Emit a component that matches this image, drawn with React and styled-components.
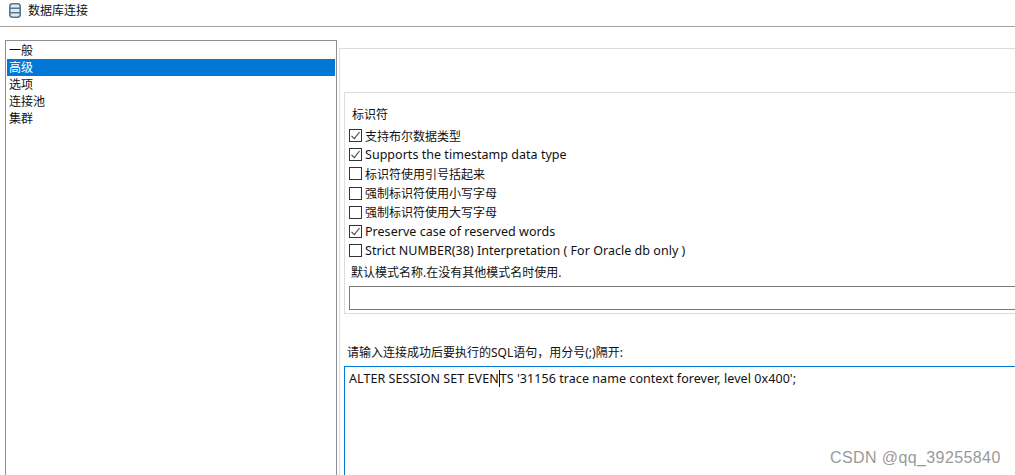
import React from "react";
import styled, { createGlobalStyle } from "styled-components";

const Global = createGlobalStyle`
  html, body { margin: 0; padding: 0; background: #fff; overflow: hidden; }
  body { font-family: "Noto Sans", "Noto Sans CJK SC", sans-serif; font-size: 12.5px; color: #111; }
`;

const Page = styled.div`
  position: relative;
  width: 1015px;
  height: 475px;
  overflow: hidden;
  background: #fff;
`;
const TitleBar = styled.header`
  box-sizing: border-box;
  height: 27px;
  border-bottom: 1px solid #a0a0a0;
  display: flex;
  align-items: flex-start;
  padding: 3px 0 0 9px;
  gap: 7px;
`;
const TitleText = styled.span`
  font-size: 12px;
  line-height: 16px;
`;
const Body = styled.div`
  display: flex;
  padding: 13px 0 0 5px;
  gap: 2px;
`;
const Nav = styled.ul`
  box-sizing: border-box;
  list-style: none;
  margin: 0;
  padding: 1px;
  width: 332px;
  height: 440px;
  flex: none;
  border: 1px solid #8a8f96;
`;
const NavItem = styled.li`
  height: 17px;
  line-height: 17px;
  padding-left: 2px;
  font-size: 12px;
  background: ${(p) => (p.$active ? "#0078d7" : "transparent")};
  color: ${(p) => (p.$active ? "#fff" : "#111")};
`;
const Panel = styled.section`
  flex: 1;
  min-width: 0;
  margin-top: 8px;
  border-left: 1px solid #dcdcdc;
  border-top: 1px solid #dcdcdc;
  padding: 43px 0 0 4px;
`;
const Group = styled.fieldset`
  box-sizing: border-box;
  margin: 0;
  height: 222px;
  border: 1px solid #dcdcdc;
  border-right: 0;
  padding: 14px 0 0 4px;
`;
const GroupTitle = styled.div`
  font-size: 12px;
  line-height: 16px;
  padding-left: 3px;
  margin-bottom: 3px;
`;
const Row = styled.label`
  display: flex;
  align-items: center;
  height: 19.17px;
  gap: 3px;
  font-size: ${(p) => (p.$cjk ? "12px" : "12.5px")};
  letter-spacing: ${(p) => (p.$cjk ? "0" : "0.03px")};
`;
const Box = styled.span`
  box-sizing: border-box;
  width: 13px;
  height: 13px;
  flex: none;
  border: 1px solid #333;
  display: flex;
  align-items: center;
  justify-content: center;
`;
const FieldLabel = styled.div`
  font-size: 12px;
  line-height: 16px;
  margin: 5px 0 5px 2px;
`;
const TextField = styled.div`
  box-sizing: border-box;
  height: 24px;
  border: 1px solid #7a7a7a;
  border-right: 0;
`;
const SqlLabel = styled.div`
  font-size: 12px;
  line-height: 16px;
  margin: 31px 0 5px 3px;
`;
const SqlArea = styled.div`
  box-sizing: border-box;
  height: 120px;
  border: 1px solid #0078d7;
  border-right: 0;
  padding: 3px 4px;
  line-height: 17px;
  white-space: pre;
  letter-spacing: 0.06px;
`;
const Caret = styled.span`
  display: inline-block;
  width: 1px;
  height: 17px;
  background: #111;
  vertical-align: top;
`;
const Watermark = styled.div`
  position: absolute;
  left: 830px;
  top: 448px;
  font-family: "Liberation Sans", sans-serif;
  font-size: 16px;
  line-height: 20px;
  color: #9a9a9a;
  letter-spacing: 0.4px;
`;

const DbIcon = () => (
  <svg width="12" height="15" viewBox="0 0 12 15">
    <rect x="0.8" y="0.8" width="10.4" height="13.4" rx="2.6" fill="#e3e9ee" stroke="#547a96" strokeWidth="1.6" />
    <path d="M1 5.3h10M1 9.7h10" stroke="#547a96" strokeWidth="1.5" />
  </svg>
);
const Check = () => (
  <svg width="11" height="11" viewBox="0 0 11 11">
    <path d="M1.5 5.8l2.8 2.8 5.2-6.6" fill="none" stroke="#444" strokeWidth="1.1" />
  </svg>
);

const Opt = ({ on, cjk, children }) => (
  <Row $cjk={cjk}>
    <Box>{on && <Check />}</Box>
    <span>{children}</span>
  </Row>
);

export default function App() {
  return (
    <Page>
      <Global />
      <TitleBar>
        <DbIcon />
        <TitleText>数据库连接</TitleText>
      </TitleBar>
      <Body>
        <Nav>
          <NavItem>一般</NavItem>
          <NavItem $active>高级</NavItem>
          <NavItem>选项</NavItem>
          <NavItem>连接池</NavItem>
          <NavItem>集群</NavItem>
        </Nav>
        <Panel>
          <Group>
            <GroupTitle>标识符</GroupTitle>
            <Opt on cjk>支持布尔数据类型</Opt>
            <Opt on>Supports the timestamp data type</Opt>
            <Opt cjk>标识符使用引号括起来</Opt>
            <Opt cjk>强制标识符使用小写字母</Opt>
            <Opt cjk>强制标识符使用大写字母</Opt>
            <Opt on>Preserve case of reserved words</Opt>
            <Opt>Strict NUMBER(38) Interpretation ( For Oracle db only )</Opt>
            <FieldLabel>默认模式名称.在没有其他模式名时使用.</FieldLabel>
            <TextField />
          </Group>
          <SqlLabel>请输入连接成功后要执行的SQL语句，用分号(;)隔开:</SqlLabel>
          <SqlArea>ALTER SESSION SET EVEN<Caret />TS '31156 trace name context forever, level 0x400';</SqlArea>
        </Panel>
      </Body>
      <Watermark>CSDN @qq_39255840</Watermark>
    </Page>
  );
}
